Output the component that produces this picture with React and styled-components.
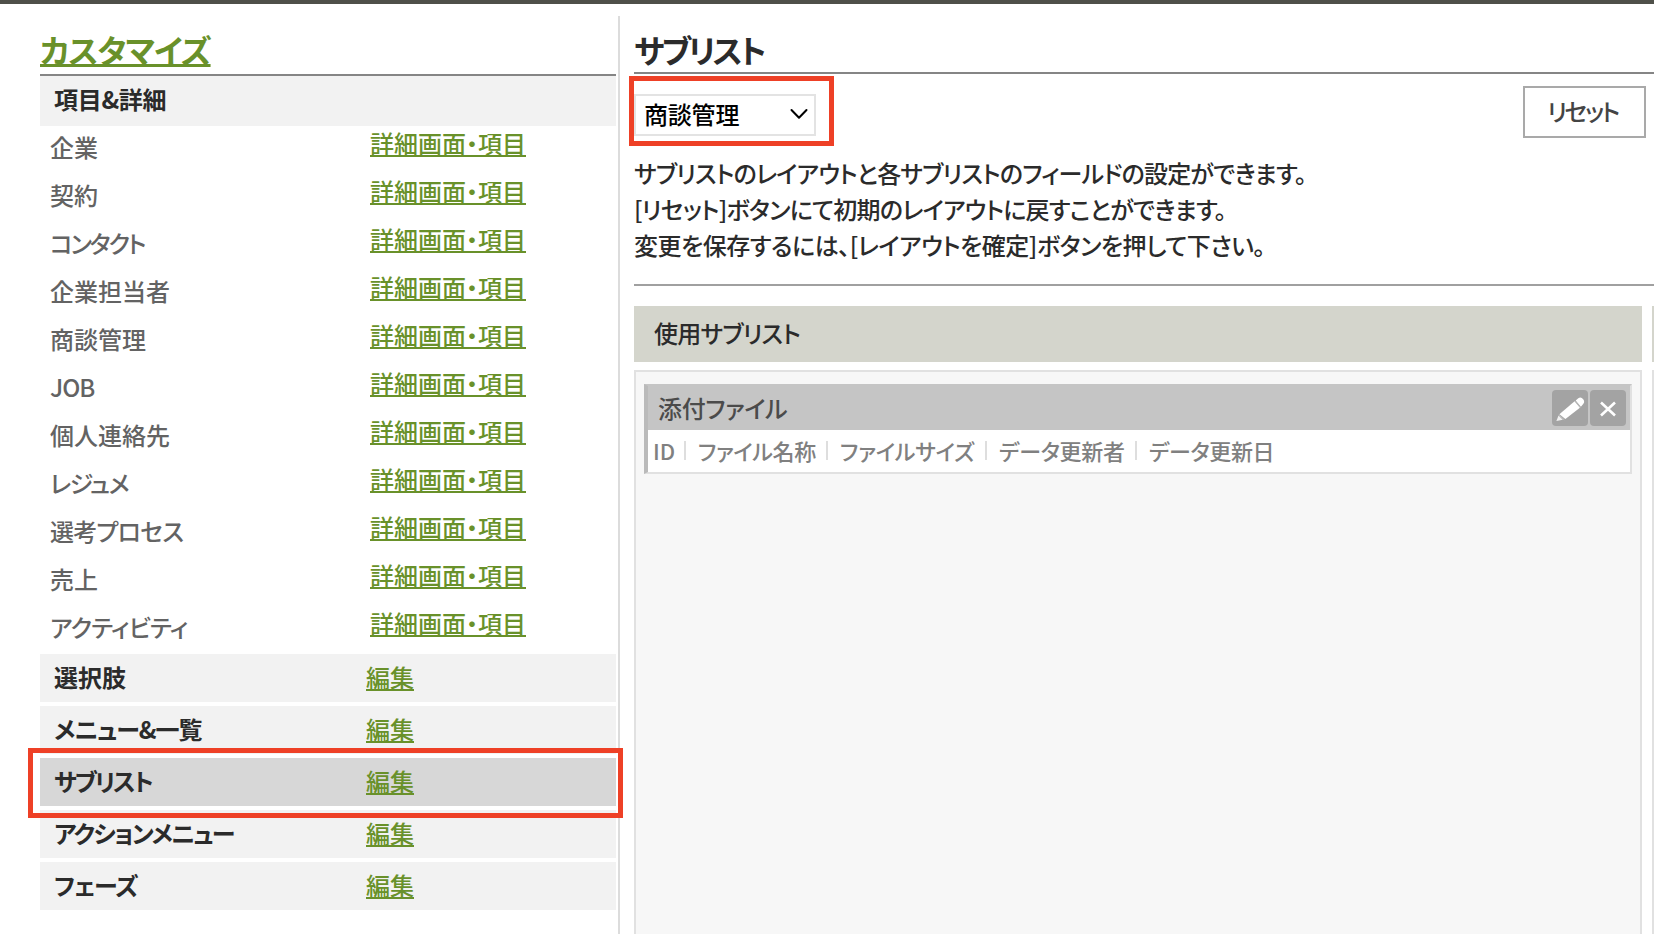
import React from 'react';
import styled, { createGlobalStyle } from 'styled-components';

const GlobalStyle = createGlobalStyle`
  *, *::before, *::after { box-sizing: border-box; }
  body {
    margin: 0;
    overflow: hidden;
    background: #fff;
    color: #2b2b2b;
    font-family: "Noto Sans CJK JP", sans-serif;
    font-size: 24px;
    font-weight: 500;
    line-height: 24px;
    font-feature-settings: "palt";
  }
`;

const Page = styled.div`
  width: 1654px;
  height: 934px;
  border-top: 4px solid #4f5049;
  display: flex;
  align-items: stretch;
  overflow: hidden;
`;

const Sidebar = styled.nav`
  width: 620px;
  flex: none;
  margin-top: 12px;
  padding: 16px 2px 0 40px;
  border-right: 2px solid #dcdcdc;
`;

const Main = styled.main`
  flex: none;
  width: 1020px;
  margin-left: 14px;
  padding-top: 28px;
`;

const Text = styled.span`
  white-space: nowrap;
  letter-spacing: ${(p) => p.$ls || 0}px;
`;

const Link = styled.a`
  color: #69912a;
  white-space: nowrap;
  cursor: pointer;
  text-decoration: underline;
  text-decoration-thickness: 2px;
  text-underline-offset: 2px;
  text-decoration-skip-ink: none;
`;

const SideTitle = styled.h2`
  margin: 0;
  width: 576px;
  height: 44px;
  padding-top: 1px;
  border-bottom: 2px solid #858585;
  font-size: 32px;
  line-height: 32px;
  font-weight: 700;
`;

const TitleLink = styled(Link)`
  letter-spacing: -1.1px;
  text-decoration-thickness: 3px;
  text-underline-offset: 1px;
`;

const GroupHeader = styled.div`
  width: 576px;
  height: 50px;
  padding: 0 0 4px 14px;
  display: flex;
  align-items: center;
  background: #f2f2f2;
  font-weight: 700;
`;

const ItemRow = styled.div`
  height: 48px;
  display: grid;
  grid-template-columns: 320px 1fr;
  padding: 9px 0 0 10px;
  color: #636363;
`;

const ItemLink = styled(Link)`
  margin-top: -4px;
`;

const Sections = styled.div`
  display: grid;
  gap: 4px;
`;

const Section = styled.div`
  position: relative;
  width: 576px;
  height: 48px;
  display: grid;
  grid-template-columns: 312px 1fr;
  align-items: center;
  padding: 0 0 2px 14px;
  background: ${(p) => (p.$active ? '#d7d7d7' : '#f2f2f2')};
  font-weight: 700;
  z-index: ${(p) => (p.$active ? 1 : 0)};
`;

const SectionLink = styled(Link)`
  font-weight: 500;
`;

const Highlight = styled.div`
  position: absolute;
  border: 5px solid #ee4026;
  pointer-events: none;
`;

const SectionHighlight = styled(Highlight)`
  left: -12px;
  top: -10px;
  width: 595px;
  height: 70px;
`;

const SelectHighlight = styled(Highlight)`
  left: -5px;
  top: -18px;
  width: 205px;
  height: 70px;
`;

const MainTitle = styled.h1`
  margin: 0;
  height: 42px;
  padding-top: 1px;
  border-bottom: 2px solid #858585;
  font-size: 32px;
  line-height: 32px;
  font-weight: 700;
`;

const Toolbar = styled.div`
  display: flex;
  justify-content: space-between;
  padding: 12px 8px 0 0;
`;

const SelectWrap = styled.div`
  position: relative;
  margin-top: 8px;
  height: 42px;
`;

const Select = styled.button`
  width: 182px;
  height: 42px;
  display: flex;
  align-items: center;
  justify-content: space-between;
  padding: 0 6px 2px 8px;
  border: 2px solid #e3e3e3;
  background: #fff;
  color: #000;
  font: inherit;
  font-feature-settings: inherit;
`;

const ResetButton = styled.button`
  width: 123px;
  height: 52px;
  padding: 0 4px 2px 0;
  border: 2px solid #a9a9a9;
  background: #fff;
  color: #444;
  font: inherit;
  font-feature-settings: inherit;
`;

const Description = styled.p`
  margin: 0;
  height: 148px;
  padding-top: 17px;
  border-bottom: 2px solid #a0a0a0;
  display: flex;
  flex-direction: column;
  line-height: 36px;
`;

const Columns = styled.div`
  display: flex;
  gap: 10px;
  padding-top: 20px;
`;

const Column = styled.section`
  flex: none;
  width: 1008px;
`;

const ColumnHeader = styled.div`
  height: 56px;
  padding: 0 0 2px 20px;
  display: flex;
  align-items: center;
  background: #d4d5cc;
`;

const DropArea = styled.div`
  height: 600px;
  margin-top: 8px;
  padding: 12px 8px;
  border: 2px solid #e1e1e1;
  background: #f7f7f7;
`;

const Card = styled.article`
  height: 90px;
  border: 2px solid #e1e1e1;
  border-top-color: #c5c5c5;
  border-left: 4px solid #bababa;
  background: #fff;
`;

const CardHeader = styled.header`
  height: 44px;
  display: flex;
  align-items: center;
  gap: 2px;
  padding: 0 4px 0 10px;
  background: #c5c5c5;
  color: #4b4b4b;
`;

const CardTitle = styled(Text)`
  flex: 1;
`;

const IconButton = styled.button`
  width: 36px;
  height: 36px;
  padding: 0;
  border: 0;
  border-radius: 4px;
  background: #a3a3a3;
  display: grid;
  place-items: center;
`;

const Fields = styled.div`
  height: 42px;
  display: flex;
  align-items: center;
  padding: 0 0 3px 5px;
  color: #808080;
  font-size: 22px;
`;

const Field = styled.span`
  flex: none;
  width: ${(p) => p.$w}px;
  white-space: nowrap;
  letter-spacing: ${(p) => p.$ls || 0}px;
`;

const Separator = styled.i`
  flex: none;
  width: 2px;
  height: 19px;
  margin: 2px 12px 0 0;
  background: #dedede;
`;

const items = [
  ['企業', 0],
  ['契約', 0],
  ['コンタクト', -2.2],
  ['企業担当者', 0],
  ['商談管理', 0],
  ['JOB', -1],
  ['個人連絡先', 0],
  ['レジュメ', -1.5],
  ['選考プロセス', -0.8],
  ['売上', 0],
  ['アクティビティ', -0.7],
];

const sections = [
  ['選択肢', 0],
  ['メニュー&一覧', -1],
  ['サブリスト', -2.2],
  ['アクションメニュー', -1.6],
  ['フェーズ', -1],
];

const lines = [
  ['サブリストのレイアウトと各サブリストのフィールドの設定ができます。', -0.77],
  ['[リセット]ボタンにて初期のレイアウトに戻すことができます。', -0.75],
  ['変更を保存するには、[レイアウトを確定]ボタンを押して下さい。', -0.48],
];

const fields = [
  ['ID', 31, 0],
  ['ファイル名称', 128, -0.4],
  ['ファイルサイズ', 145, -0.25],
  ['データ更新者', 136, -0.3],
  ['データ更新日', 130, -0.4],
];

const Chevron = () => (
  <svg width="18" height="12" viewBox="0 0 18 12" fill="none">
    <path d="M1.5 2 9 9.8 16.5 2" stroke="#000" strokeWidth="2" strokeLinecap="round" strokeLinejoin="round" />
  </svg>
);

const Pencil = () => (
  <svg width="36" height="36" viewBox="0 0 36 36" fill="#fff">
    <path d="M7.4 24.2 13.4 29 27.9 17.7 22.6 11.3Z" />
    <path d="M23.7 10.4 26.3 8.2Q29 6.4 31.2 9.2 33.2 12 31 14.2L28.9 16.8Z" />
    <path d="M6.5 25.5 10.8 29.8 4.4 31Z" opacity="0.85" />
    <path d="M22.9 11.1 28.4 17.4M6.9 24.9 12.2 29.8" stroke="#c4c4c4" strokeWidth="0.9" />
  </svg>
);

const Cross = () => (
  <svg width="36" height="36" viewBox="0 0 36 36" fill="none">
    <path d="M11 12.5 25 25.5M25 12.5 11 25.5" stroke="#fff" strokeWidth="2.6" />
  </svg>
);

export default function App() {
  return (
    <Page>
      <GlobalStyle />
      <Sidebar>
        <SideTitle>
          <TitleLink>カスタマイズ</TitleLink>
        </SideTitle>
        <GroupHeader>
          <Text $ls={-0.3}>項目&amp;詳細</Text>
        </GroupHeader>
        {items.map(([name, ls]) => (
          <ItemRow key={name}>
            <Text $ls={ls}>{name}</Text>
            <ItemLink>詳細画面・項目</ItemLink>
          </ItemRow>
        ))}
        <Sections>
          {sections.map(([name, ls]) => (
            <Section key={name} $active={name === 'サブリスト'}>
              <Text $ls={ls}>{name}</Text>
              <SectionLink>編集</SectionLink>
              {name === 'サブリスト' && <SectionHighlight />}
            </Section>
          ))}
        </Sections>
      </Sidebar>
      <Main>
        <MainTitle>
          <Text $ls={-3}>サブリスト</Text>
        </MainTitle>
        <Toolbar>
          <SelectWrap>
            <Select>
              <Text $ls={-0.2}>商談管理</Text>
              <Chevron />
            </Select>
            <SelectHighlight />
          </SelectWrap>
          <ResetButton>
            <Text $ls={-2.3}>リセット</Text>
          </ResetButton>
        </Toolbar>
        <Description>
          {lines.map(([line, ls]) => (
            <Text key={line} $ls={ls}>{line}</Text>
          ))}
        </Description>
        <Columns>
          <Column>
            <ColumnHeader>
              <Text $ls={-0.75}>使用サブリスト</Text>
            </ColumnHeader>
            <DropArea>
              <Card>
                <CardHeader>
                  <CardTitle $ls={-0.3}>添付ファイル</CardTitle>
                  <IconButton aria-label="編集"><Pencil /></IconButton>
                  <IconButton aria-label="削除"><Cross /></IconButton>
                </CardHeader>
                <Fields>
                  {fields.map(([name, w, ls], i) => (
                    <React.Fragment key={name}>
                      {i > 0 && <Separator />}
                      <Field $w={w} $ls={ls}>{name}</Field>
                    </React.Fragment>
                  ))}
                </Fields>
              </Card>
            </DropArea>
          </Column>
          <Column>
            <ColumnHeader />
            <DropArea />
          </Column>
        </Columns>
      </Main>
    </Page>
  );
}
